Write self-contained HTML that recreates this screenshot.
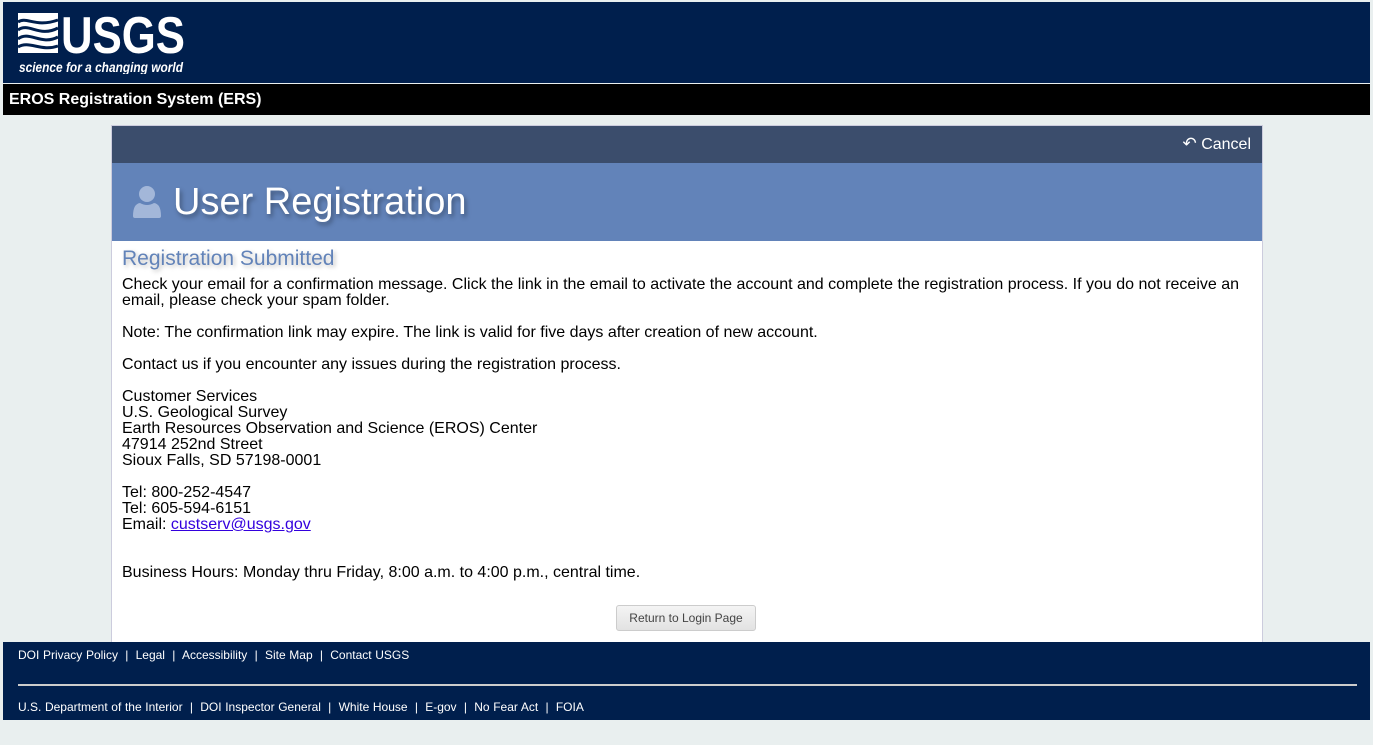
<!DOCTYPE html>
<html><head><meta charset="utf-8"><style>
*{margin:0;padding:0;box-sizing:border-box}
body{width:1373px;height:745px;background:#e9efef;font-family:"Liberation Sans",sans-serif;position:relative;overflow:hidden}
#hdr{position:absolute;left:3px;top:2px;width:1367px;height:81px;background:#001f4d}
#bar{position:absolute;left:3px;top:84px;width:1367px;height:31px;background:#000;color:#fff;font-weight:bold;font-size:16px;line-height:31px;padding-left:6px}
#card{position:absolute;left:111px;top:125px;width:1152px;height:517px;background:#fff;border:1px solid #ccd;border-bottom:none}
#top{height:37px;background:#3b4d6c;color:#fff;font-size:16px;text-align:right;padding:8px 11px 0 0}
#blue{height:78px;background:#6283b9;position:relative}
#blue h1{position:absolute;left:61px;top:18px;font-size:38px;font-weight:normal;color:#fff;text-shadow:2px 3px 5px rgba(0,0,0,.35)}
#cnt{padding:6px 10px;font-size:16px;color:#000;line-height:16px}
#cnt h2{font-size:21px;font-weight:normal;color:#6283b9;text-shadow:2px 2px 4px rgba(0,0,0,.25);line-height:24px;margin-bottom:6px}
#cnt p{margin-bottom:16px}
a{color:#3300dd}
#btn{position:absolute;left:504px;top:479px;width:140px;height:26px;border:1px solid #ccc;border-radius:3px;background:linear-gradient(#f4f4f4,#e2e2e2);font-size:12px;color:#444;text-align:center;line-height:24px}
#ftr{position:absolute;left:3px;top:642px;width:1367px;height:78px;background:#001f4d;color:#fff;font-size:12px}
#ftr .l{position:absolute;left:15px;word-spacing:0.3px}
#ftr hr{position:absolute;left:15px;top:42px;width:1339px;border:none;border-top:2px solid #ccc}
</style></head><body>
<div id="hdr">
<svg style="position:absolute;left:14px;top:10px" width="170" height="62" viewBox="0 0 170 62">
<rect x="1" y="1" width="40" height="40" fill="#fff"/>
<path d="M1 10 C10 4,18 16,41 8 M1 18 C12 10,22 26,41 16 M1 27 C12 18,24 34,41 25 M1 35 C12 28,24 40,41 34" stroke="#001f4d" stroke-width="3" fill="none"/>
<text x="44" y="41" font-family="Liberation Sans" font-weight="bold" font-size="52" fill="#fff" textLength="124" lengthAdjust="spacingAndGlyphs">USGS</text>
<text x="2" y="60" font-family="Liberation Sans" font-weight="bold" font-style="italic" font-size="13.5" fill="#fff" textLength="164" lengthAdjust="spacingAndGlyphs">science for a changing world</text>
</svg>
</div>
<div id="bar">EROS Registration System (ERS)</div>
<div id="card">
<div id="top"><span style="font-size:17px">&#x21B6;</span> Cancel</div>
<div id="blue">
<svg style="position:absolute;left:20px;top:22px" width="30" height="34" viewBox="0 0 30 34"><circle cx="15" cy="9" r="8" fill="#a3b7d9"/><path d="M1 31 Q1 19 8 18 Q15 22 22 18 Q29 19 29 31 Q29 33 27 33 L3 33 Q1 33 1 31Z" fill="#a3b7d9"/></svg>
<h1>User Registration</h1></div>
<div id="cnt">
<h2>Registration Submitted</h2>
<p>Check your email for a confirmation message. Click the link in the email to activate the account and complete the registration process. If you do not receive an email, please check your spam folder.</p>
<p>Note: The confirmation link may expire. The link is valid for five days after creation of new account.</p>
<p>Contact us if you encounter any issues during the registration process.</p>
<p>Customer Services<br>U.S. Geological Survey<br>Earth Resources Observation and Science (EROS) Center<br>47914 252nd Street<br>Sioux Falls, SD 57198-0001</p>
<p>Tel: 800-252-4547<br>Tel: 605-594-6151<br>Email: <a href="#">custserv@usgs.gov</a></p>
<p style="margin-top:32px">Business Hours: Monday thru Friday, 8:00 a.m. to 4:00 p.m., central time.</p>
</div>
<div id="btn">Return to Login Page</div>
</div>
<div id="ftr">
<div class="l" style="top:6px">DOI Privacy Policy &nbsp;|&nbsp; Legal &nbsp;|&nbsp; Accessibility &nbsp;|&nbsp; Site Map &nbsp;|&nbsp; Contact USGS</div>
<hr>
<div class="l" style="top:58px">U.S. Department of the Interior &nbsp;|&nbsp; DOI Inspector General &nbsp;|&nbsp; White House &nbsp;|&nbsp; E-gov &nbsp;|&nbsp; No Fear Act &nbsp;|&nbsp; FOIA</div>
</div>
</body></html>
